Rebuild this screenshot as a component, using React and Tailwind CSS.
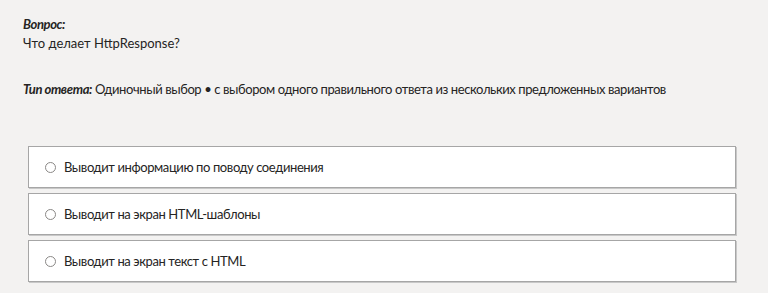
const options = [
  'Выводит информацию по поводу соединения',
  'Выводит на экран HTML-шаблоны',
  'Выводит на экран текст с HTML',
];

const App = () => {
  return (
    <div className="min-h-[293px] bg-[#f3f2f1] text-[#252423] text-[13px] leading-[19px] tracking-[-0.4px] font-['Lato',sans-serif]">
      <div className="pl-[23px] pr-[32px] pt-[15px]">
        <div className="font-bold italic">Вопрос:</div>
        <div className="tracking-[0px]">Что делает HttpResponse?</div>
        <div className="mt-[27px]">
          <span className="font-bold italic">Тип ответа:</span>{' '}
          Одиночный выбор • с выбором одного правильного ответа из нескольких предложенных вариантов
        </div>
      </div>
      <div className="mt-[47px] ml-[28px] w-[708px] flex flex-col gap-[5px]">
        {options.map((text) => (
          <label
            key={text}
            className="h-[42px] flex items-center bg-white border border-[#a6a6a6] shadow-[1px_1px_0_#c8c8c8] pl-[16px]"
          >
            <span className="w-[11px] h-[11px] rounded-full border border-[#8a8886] bg-white mr-[8px]" />
            <span>{text}</span>
          </label>
        ))}
      </div>
    </div>
  );
};

export default App;
